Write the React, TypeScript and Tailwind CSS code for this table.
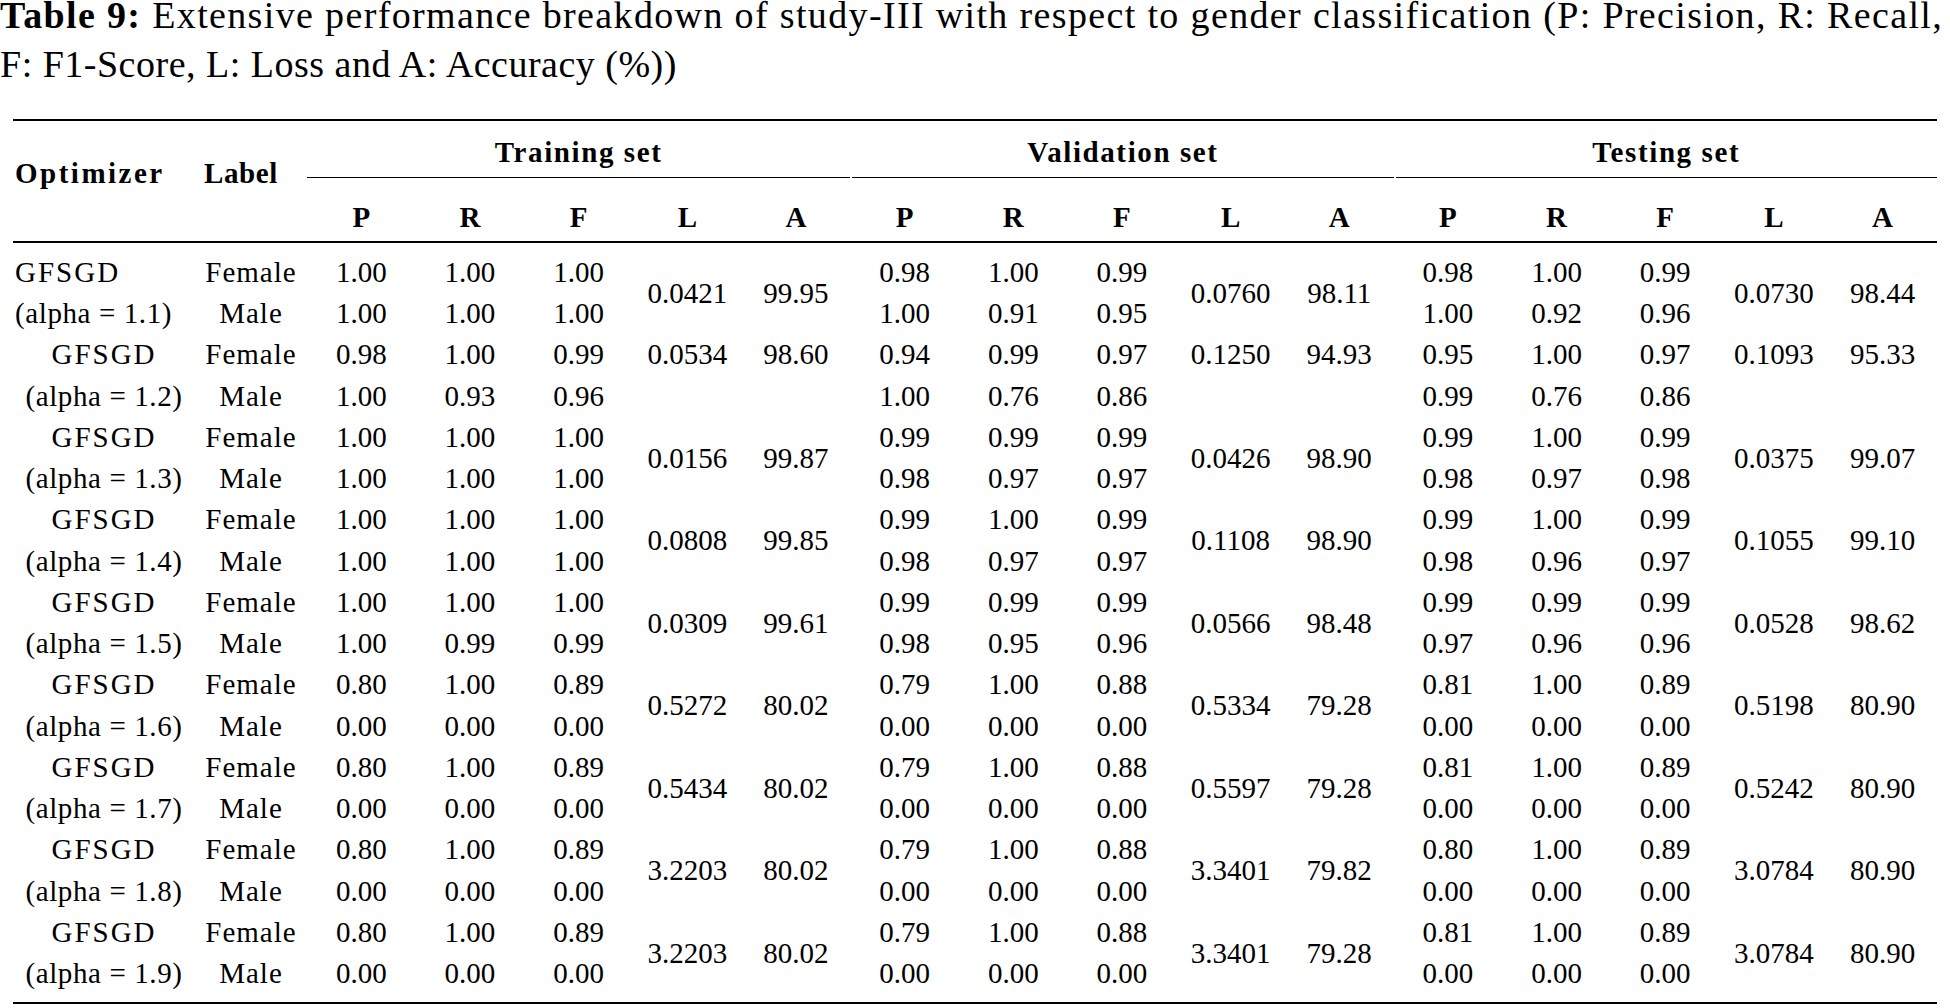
import React from "react";

type Group = {
  alpha: string;
  female: string[][];
  male: string[][];
  la: string[][];
  topOnly?: boolean;
};

const groups: Group[] = [
  {
    alpha: "1.1",
    female: [["1.00", "1.00", "1.00"], ["0.98", "1.00", "0.99"], ["0.98", "1.00", "0.99"]],
    male: [["1.00", "1.00", "1.00"], ["1.00", "0.91", "0.95"], ["1.00", "0.92", "0.96"]],
    la: [["0.0421", "99.95"], ["0.0760", "98.11"], ["0.0730", "98.44"]],
  },
  {
    alpha: "1.2",
    female: [["0.98", "1.00", "0.99"], ["0.94", "0.99", "0.97"], ["0.95", "1.00", "0.97"]],
    male: [["1.00", "0.93", "0.96"], ["1.00", "0.76", "0.86"], ["0.99", "0.76", "0.86"]],
    la: [["0.0534", "98.60"], ["0.1250", "94.93"], ["0.1093", "95.33"]],
    topOnly: true,
  },
  {
    alpha: "1.3",
    female: [["1.00", "1.00", "1.00"], ["0.99", "0.99", "0.99"], ["0.99", "1.00", "0.99"]],
    male: [["1.00", "1.00", "1.00"], ["0.98", "0.97", "0.97"], ["0.98", "0.97", "0.98"]],
    la: [["0.0156", "99.87"], ["0.0426", "98.90"], ["0.0375", "99.07"]],
  },
  {
    alpha: "1.4",
    female: [["1.00", "1.00", "1.00"], ["0.99", "1.00", "0.99"], ["0.99", "1.00", "0.99"]],
    male: [["1.00", "1.00", "1.00"], ["0.98", "0.97", "0.97"], ["0.98", "0.96", "0.97"]],
    la: [["0.0808", "99.85"], ["0.1108", "98.90"], ["0.1055", "99.10"]],
  },
  {
    alpha: "1.5",
    female: [["1.00", "1.00", "1.00"], ["0.99", "0.99", "0.99"], ["0.99", "0.99", "0.99"]],
    male: [["1.00", "0.99", "0.99"], ["0.98", "0.95", "0.96"], ["0.97", "0.96", "0.96"]],
    la: [["0.0309", "99.61"], ["0.0566", "98.48"], ["0.0528", "98.62"]],
  },
  {
    alpha: "1.6",
    female: [["0.80", "1.00", "0.89"], ["0.79", "1.00", "0.88"], ["0.81", "1.00", "0.89"]],
    male: [["0.00", "0.00", "0.00"], ["0.00", "0.00", "0.00"], ["0.00", "0.00", "0.00"]],
    la: [["0.5272", "80.02"], ["0.5334", "79.28"], ["0.5198", "80.90"]],
  },
  {
    alpha: "1.7",
    female: [["0.80", "1.00", "0.89"], ["0.79", "1.00", "0.88"], ["0.81", "1.00", "0.89"]],
    male: [["0.00", "0.00", "0.00"], ["0.00", "0.00", "0.00"], ["0.00", "0.00", "0.00"]],
    la: [["0.5434", "80.02"], ["0.5597", "79.28"], ["0.5242", "80.90"]],
  },
  {
    alpha: "1.8",
    female: [["0.80", "1.00", "0.89"], ["0.79", "1.00", "0.88"], ["0.80", "1.00", "0.89"]],
    male: [["0.00", "0.00", "0.00"], ["0.00", "0.00", "0.00"], ["0.00", "0.00", "0.00"]],
    la: [["3.2203", "80.02"], ["3.3401", "79.82"], ["3.0784", "80.90"]],
  },
  {
    alpha: "1.9",
    female: [["0.80", "1.00", "0.89"], ["0.79", "1.00", "0.88"], ["0.81", "1.00", "0.89"]],
    male: [["0.00", "0.00", "0.00"], ["0.00", "0.00", "0.00"], ["0.00", "0.00", "0.00"]],
    la: [["3.2203", "80.02"], ["3.3401", "79.28"], ["3.0784", "80.90"]],
  },
];

const sets = ["Training set", "Validation set", "Testing set"];
const metrics = ["P", "R", "F", "L", "A"];

const cell = "p-0 text-center font-normal align-middle";

// rows are 41px, four of the Male rows get one more pixel so the pitch averages ~41.24px
const GroupRows = ({ g, index }: { g: Group; index: number }) => {
  const first = index === 0;
  const optCell = `p-0 whitespace-nowrap align-middle ${first ? "text-left pl-[2px]" : "text-center"}`;
  return (
    <>
      <tr className="leading-[41px]">
        <td className={`${optCell} tracking-[2px]`}>GFSGD</td>
        <td className={`${cell} tracking-[1px]`}>Female</td>
        {g.female.map((prf, i) => (
          <React.Fragment key={i}>
            {prf.map((v, j) => (
              <td key={j} className={cell}>
                {v}
              </td>
            ))}
            <td rowSpan={g.topOnly ? 1 : 2} className={cell}>
              {g.la[i][0]}
            </td>
            <td rowSpan={g.topOnly ? 1 : 2} className={cell}>
              {g.la[i][1]}
            </td>
          </React.Fragment>
        ))}
      </tr>
      <tr className={index % 2 === 1 ? "leading-[42px]" : "leading-[41px]"}>
        <td className={`${optCell} tracking-[0.6px]`}>(alpha = {g.alpha})</td>
        <td className={`${cell} tracking-[1px]`}>Male</td>
        {g.male.map((prf, i) => (
          <React.Fragment key={i}>
            {prf.map((v, j) => (
              <td key={j} className={cell}>
                {v}
              </td>
            ))}
            {g.topOnly && (
              <>
                <td className={cell}></td>
                <td className={cell}></td>
              </>
            )}
          </React.Fragment>
        ))}
      </tr>
    </>
  );
};

export default function App() {
  return (
    <div className="w-[1950px] min-h-[1008px] bg-white text-black font-['Liberation_Serif',serif] overflow-hidden">
      <div className="mt-[-9px] text-[38px] leading-[49px] whitespace-nowrap">
        <div className="tracking-[1.35px]">
          <span className="font-bold">Table 9:</span> Extensive performance breakdown of study-III with respect to
          gender classification (P: Precision, R: Recall,
        </div>
        <div className="tracking-[0.5px]">F: F1-Score, L: Loss and A: Accuracy (%))</div>
      </div>

      <table className="ml-[13px] mt-[30px] w-[1924px] table-fixed border-separate border-spacing-0 text-[29px]">
        <colgroup>
          <col className="w-[182px]" />
          <col className="w-[112px]" />
          {Array.from({ length: 15 }).map((_, i) => (
            <col key={i} />
          ))}
        </colgroup>
        <thead>
          <tr>
            <th
              rowSpan={2}
              className="p-0 pt-[32px] pl-[2px] align-top text-left font-bold leading-[41px] tracking-[2.5px] border-t-2 border-b-2 border-black"
            >
              Optimizer
            </th>
            <th
              rowSpan={2}
              className="p-0 pt-[32px] pl-[9px] align-top text-left font-bold leading-[41px] tracking-[0.6px] border-t-2 border-b-2 border-black"
            >
              Label
            </th>
            {sets.map((s, i) => (
              <th key={s} colSpan={5} className="p-0 pt-[11px] align-top font-bold border-t-2 border-black">
                <div
                  className={`leading-[41px] pb-[4px] tracking-[1.6px] border-b border-black ${i > 0 ? "ml-[2px]" : ""}`}
                >
                  {s}
                </div>
              </th>
            ))}
          </tr>
          <tr>
            {sets.map((s) =>
              metrics.map((m) => (
                <th
                  key={s + m}
                  className="p-0 pt-[19px] pb-[3px] text-center font-bold leading-[41px] border-b-2 border-black"
                >
                  {m}
                </th>
              ))
            )}
          </tr>
        </thead>
        <tbody>
          <tr>
            <td colSpan={17} className="p-0 h-[9px]"></td>
          </tr>
          {groups.map((g, i) => (
            <GroupRows key={g.alpha} g={g} index={i} />
          ))}
          <tr>
            <td colSpan={17} className="p-0 h-[10px] border-b-2 border-black"></td>
          </tr>
        </tbody>
      </table>
    </div>
  );
}
